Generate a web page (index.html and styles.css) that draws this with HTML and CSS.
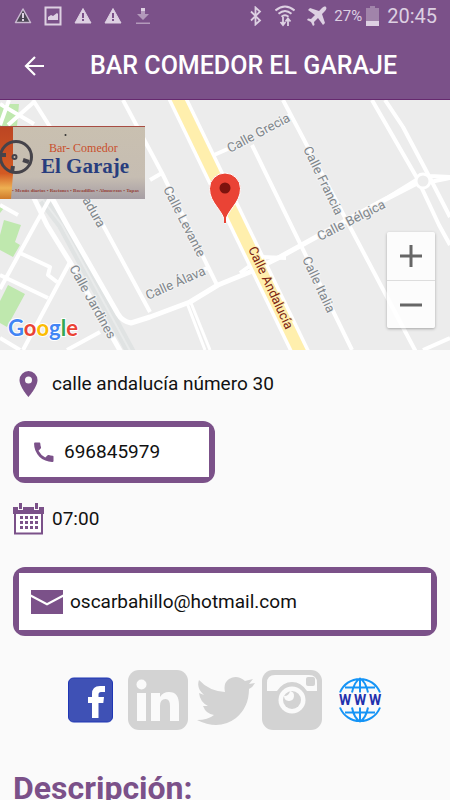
FILE: index.html
```html
<!DOCTYPE html>
<html lang="es">
<head>
<meta charset="utf-8">
<meta name="viewport" content="width=device-width, initial-scale=1">
<title>Bar Comedor El Garaje</title>
<link rel="stylesheet" href="styles.css">
</head>
<body>
<header class="top">
  <div class="status">
    <div class="status-left">
      <svg width="18" height="18" viewBox="0 0 18 18"><path d="M9 2 16.500 15.500H1.500Z" fill="#4b4654" stroke="#c9b8d0" stroke-width="1.500" stroke-linejoin="round"/><path d="M8 6h2v5H8zM8 12h2v2H8z" fill="#ddd0e2"/></svg>
      <svg width="18" height="20" viewBox="0 0 18 20"><path d="M1.500 1.500h15v17h-15z" fill="none" stroke="#ddd0e2" stroke-width="2"/><path d="M4 14v-3l3-2 2 1 4-3 1 1v6z" fill="#ddd0e2"/></svg>
      <svg width="18" height="18" viewBox="0 0 18 18"><path d="M9 1.500 17 16H1Z" fill="#ddd0e2" stroke="#ddd0e2" stroke-linejoin="round"/><path d="M8 6h2v5H8zM8 12h2v2H8z" fill="#7b5189"/></svg>
      <svg width="18" height="18" viewBox="0 0 18 18"><path d="M9 1.500 17 16H1Z" fill="#ddd0e2" stroke="#ddd0e2" stroke-linejoin="round"/><path d="M8 6h2v5H8zM8 12h2v2H8z" fill="#7b5189"/></svg>
      <svg width="18" height="18" viewBox="0 0 18 18"><path d="M7 1h4v3H7z" fill="#ddd0e2"/><path d="M7 4h4v3h4l-6 6-6-6h4zM2 15.500h14V17H2z" fill="#b39abb"/></svg>
    </div>
    <div class="status-right">
      <svg width="14" height="20" viewBox="0 0 14 20"><path d="m2 5.500 9 9-4.500 4V1.500l4.500 4-9 9" fill="none" stroke="#ddd0e2" stroke-width="1.800"/></svg>
      <svg class="wifi" width="20" height="22" viewBox="1 0 20 22" fill="none" stroke="#ddd0e2" stroke-width="2"><path d="M1.500 5.500Q11-2.500 20.500 5.500M4.500 8.800Q11 3.200 17.500 8.800M7.500 11.800Q11 8.800 14.500 11.800"/><path d="M9 12v7M6.500 17 9 20l2.500-3M14 21v-7M11.500 16.500 14 13.500l2.500 3" stroke-width="1.800"/></svg>
      <svg class="plane" width="20" height="20" viewBox="0 0 20 20"><path d="M19 1c-1-1-3 0-4 1l-3 3L3 2 1 4l7 5-4 4-3-.5L0 14l4 2 2 4 1.500-1L7 16l4-4 5 7 2-2-3-9 3-3c1-1 2-3 1-4Z" fill="#ddd0e2"/></svg>
      <span class="percent">27%</span>
      <svg class="battery" width="13" height="20" viewBox="0 0 13 20"><path d="M4 0h5v2h4v13H0V2h4z" fill="#a184aa"/><path d="M0 15h13v5H0z" fill="#ddd0e2"/></svg>
      <span class="clock">20:45</span>
    </div>
  </div>
  <div class="bar">
    <button class="back" type="button" aria-label="Volver"><svg width="22" height="20" viewBox="0 0 22 20" fill="none" stroke="#fff" stroke-width="2.200"><path d="M11 1 2 10l9 9M2 10H20"/></svg></button>
    <h1>BAR COMEDOR EL GARAJE</h1>
  </div>
</header>

<section class="map" aria-label="Mapa">
  <svg class="map-art" viewBox="0 100 450 250" preserveAspectRatio="xMidYMid slice">
    <defs>
      <linearGradient id="paper" x1="0" y1="0" x2="0" y2="1"><stop offset="0" stop-color="#c9c0b0"/><stop offset=".7" stop-color="#c6bdb2"/><stop offset="1" stop-color="#a69ea4"/></linearGradient>
      <linearGradient id="strip" x1="0" y1="0" x2="0" y2="1"><stop offset="0" stop-color="#bb4523"/><stop offset=".65" stop-color="#d35a23"/><stop offset=".85" stop-color="#edb052"/><stop offset="1" stop-color="#cf7a2b"/></linearGradient>
    </defs>
    <path d="M0 100h450v250H0z" fill="#ececec"/>
    <g fill="#bfe8ae">
      <path d="M0 104h19l-2 22H0zM4 220l17 5-6 17 5 3-7 12-13-7v-15zM8 285l17 9-18 33-7-4v-22zM0 205l4 3-4 5z"/>
    </g>
    <path d="M43 200 62 225 135 360" fill="none" stroke="#e0e3e3" stroke-width="10"/>
    <path d="M43 200 62 225 135 360" fill="none" stroke="#e9ebeb" stroke-width="2"/>
    <g fill="none" stroke="#fff" stroke-width="4" stroke-linejoin="round">
      <path d="M0 104 34 124M9 100 0 125M34 102 8 125M33 100 52 130 85 195 103 225 150 312"/>
      <path d="M30 190 47 225 70 262 122 354" stroke-width="5"/>
      <path d="M52 198 67 225 118 314Q122 321 131 323L150 317 190 302 218 285 250 272 280 257 318 236 384 200 417 183" stroke-width="5"/>
      <path d="M50 198 35 225 0 289M0 205 18 215M20 253 50 267 48 275 57 282M0 275 48 298M70 262 23 350M67 350 100 332M0 338 20 350" />
      <path d="M123 100 162 173 218 287M150 180 162 173M195 273 210 267"/>
      <path d="M283 100 416 352M252 145 352 350M214 155 230 148M285 118 292 114"/>
      <path d="M187 303 205 350M191 303 210 350" stroke-width="3"/>
      <path d="M372 100 417 178 439 225 450 245M385 100 403 127 430 178 450 217M384 200 418 179M430 176 450 177M430 182 450 178M423 350 450 338"/>
      <circle cx="423" cy="181" r="7" fill="#ececec" stroke-width="3"/>
    </g>
    <path d="M171 85 303 358" stroke="#fff" stroke-width="19"/>
    <path d="M240 273 262 257 286 258" fill="none" stroke="#fff" stroke-width="4"/>
    <path d="M171 85 303 358" stroke="#ffefad" stroke-width="12"/>
    <g class="street">
      <text transform="translate(230 153) rotate(-28)">Calle Grecia</text>
      <text transform="translate(303 149) rotate(64)">Calle Francia</text>
      <text transform="translate(320 241) rotate(-27)">Calle Bélgica</text>
      <text transform="translate(163 189) rotate(63)">Calle Levante</text>
      <text transform="translate(148 300) rotate(-24)">Calle Álava</text>
      <text transform="translate(302 259) rotate(65)">Calle Italia</text>
      <text transform="translate(69 268) rotate(61)">Calle Jardines</text>
      <text transform="translate(82 200) rotate(60)">adura</text>
      <text class="avenue" transform="translate(248 249) rotate(65)">Calle Andalucía</text>
    </g>
    <g>
      <path d="M0 126h145v73H0z" fill="url(#paper)"/>
      <path d="M0 126h13v48l-2 25H0z" fill="url(#strip)"/>
      <path d="M0 126.500h145" stroke="#a84d43"/>
      <g fill="none" stroke="#45434a"><circle cx="16" cy="157" r="15.500" stroke-width="3"/><circle cx="14.500" cy="157" r="2" stroke-width="2"/><path d="M0 155h6M23 160l6 2M12 172l1-6" stroke-width="4"/></g>
      <circle cx="65.500" cy="135" r="1" fill="#333"/>
      <g class="sign">
        <text class="sign-top" x="49" y="152">Bar- Comedor</text>
        <text class="sign-name" x="41" y="173">El Garaje</text>
        <text class="sign-foot" x="12" y="192">• Menús diarios • Raciones • Bocadillos • Almuerzos • Tapas</text>
      </g>
    </g>
    <path d="M225 224c-1-14-15.500-20-15.500-35.500a15.500 15.500 0 0 1 31 0C240.500 204 226 210 225 224Z" fill="#ea4335" stroke="#fff" stroke-width="1"/>
    <path d="M224 212h2v11h-2z" fill="#ea4335"/>
    <circle cx="225" cy="188" r="5.500" fill="#7d130e"/>
    <text class="google" x="8" y="336"><tspan fill="#4285f4">G</tspan><tspan fill="#ea4335">o</tspan><tspan fill="#fbbc05">o</tspan><tspan fill="#4285f4">g</tspan><tspan fill="#34a853">l</tspan><tspan fill="#ea4335">e</tspan></text>
  </svg>
  <div class="zoom">
    <button type="button" aria-label="Acercar"><svg width="22" height="22" viewBox="0 0 22 22"><path d="M9.500 0h3v9.500H22v3h-9.500V22h-3v-9.500H0v-3h9.500z" fill="#666"/></svg></button>
    <button type="button" aria-label="Alejar"><svg width="22" height="22" viewBox="0 0 22 22"><path d="M0 9.500h22v3H0z" fill="#666"/></svg></button>
  </div>
</section>

<main>
  <div class="row">
    <svg class="row-icon" width="30" height="26" viewBox="0 0 30 26"><path d="M15 0a9 9 0 0 0-9 9c0 7 9 17 9 17s9-10 9-17a9 9 0 0 0-9-9Zm0 5.500a3.500 3.500 0 1 1 0 7 3.500 3.500 0 0 1 0-7Z" fill="#7b5189" fill-rule="evenodd"/></svg>
    <span>calle andalucía número 30</span>
  </div>
  <a class="box phone" href="tel:696845979">
    <span class="box-in">
      <svg width="20" height="20" viewBox="0 0 20 20"><path d="M1 .5h4.500q.7 0 .8.900.100 2 .7 3.800.2.700-.3 1.200L4.500 8.700a16 16 0 0 0 6.800 6.800l2.300-2.200q.500-.5 1.200-.3 1.800.6 3.800.7.900.1.900.8V19q0 .9-1 .9A18 18 0 0 1 .1 1.500Q.1.500 1 .5Z" fill="#7b5189"/></svg>
      <span>696845979</span>
    </span>
  </a>
  <div class="row hours">
    <svg class="row-icon" width="31" height="32" viewBox="0 0 31 32"><path d="M2 10h27v20.500H2z" fill="#fff" stroke="#7b5189" stroke-width="2"/><path d="M0 4h5v3h5V4h11v3h5V4h5v7H0zM6 0h3v6H6zM22 0h3v6h-3z" fill="#7b5189"/><path d="M7 14.500h18M7 19.500h18M7 24.500h18" stroke="#7b5189" stroke-width="3" stroke-dasharray="3 2"/></svg>
    <span>07:00</span>
  </div>
  <a class="box mail" href="mailto:oscarbahillo@hotmail.com">
    <span class="box-in">
      <svg width="32" height="24" viewBox="0 0 32 24"><path d="M0 0h32v4.500L16 13 0 4.500zM0 7l16 8.500L32 7v17H0z" fill="#7b5189"/></svg>
      <span>oscarbahillo@hotmail.com</span>
    </span>
  </a>
  <nav class="social" aria-label="Redes sociales">
    <a href="#facebook" aria-label="Facebook"><svg width="60" height="60" viewBox="0 0 60 60"><rect x="7.500" y="8" width="44" height="44" rx="5" fill="#3f51b5" stroke="#1f36b5"/><path d="M31 48V33h-4v-6h4v-3q0-8 8-8h5v6h-4q-2.500 0-2.500 2.500V27H43l-.7 6h-4.800v15z" fill="#fff"/></svg></a>
    <a href="#linkedin" aria-label="LinkedIn"><svg width="60" height="60" viewBox="0 0 60 60"><rect width="60" height="60" rx="11" fill="#d3d3d3"/><g fill="#fafafa"><circle cx="13.500" cy="14.500" r="5"/><path d="M9 23h9v28H9zM23 23h9v4q3-5 9-5 10 0 10 13v16h-9V36q0-7-4.500-7-5.500 0-5.500 7v15h-9z"/></g></svg></a>
    <a href="#twitter" aria-label="Twitter"><svg width="60" height="60" viewBox="0 0 60 60"><path d="M4 10q10 11 26 12-2-9 4-13 8-5 16 2l8-2-4 5 6-1q-2 4-6 6 0 18-13 29-17 13-39 2 11 0 17-5-8-1-11-9h5q-8-4-9-13l5 2Q1 18 4 10Z" fill="#d3d3d3"/></svg></a>
    <a href="#instagram" aria-label="Instagram"><svg width="60" height="60" viewBox="0 0 60 60"><rect width="60" height="60" rx="11" fill="#d3d3d3"/><path d="M5 21V13q0-8 8-8h34q8 0 8 8v8H45Q39 12 30 12T15 21Z" fill="#fafafa"/><rect x="44" y="7" width="9" height="9" rx="2" fill="#d3d3d3"/><circle cx="30" cy="30" r="13.500" fill="#fafafa"/><circle cx="30" cy="30" r="9" fill="#d3d3d3"/><path d="M22 26a5.500 5.500 0 0 0 6-5 5 5 0 1 1-6 5Z" fill="#fafafa"/></svg></a>
    <a href="#web" aria-label="Página web"><svg width="60" height="60" viewBox="0 0 60 60"><g fill="none" stroke="#1594f6" stroke-width="2"><path d="M11 22.500a21.500 21.500 0 0 1 40 0M11 37.500a21.500 21.500 0 0 0 40 0M31 8v14.500M31 37.500V52M23 22.500Q25 12 31 8.500 37 12 39 22.500M23 37.500Q25 48 31 51.500 37 48 39 37.500M16 17.500h30M16 42.500h30"/></g><text class="www" x="10 25 40" y="35">WWW</text></svg></a>
  </nav>
  <h2>Descripción:</h2>
</main>
</body>
</html>
```
FILE: styles.css
```css
* {
  box-sizing: border-box;
}

html {
  scrollbar-width: none;
}

body {
  margin: 0;
  background: #fafafa;
  color: #111;
  font-family: Roboto, "Liberation Sans", sans-serif;
  font-size: 19px;
  line-height: 24px;
}

svg {
  display: block;
  flex: none;
}

button {
  border: 0;
  padding: 0;
  background: none;
}

a {
  color: inherit;
  text-decoration: none;
}

.top {
  background: #7b5189;
  border-bottom: 1px solid #66296f;
}

.status {
  display: flex;
  justify-content: space-between;
  align-items: center;
  height: 32px;
  padding: 0 13px 0 14px;
  color: #ddd0e2;
}

.status-left,
.status-right {
  display: flex;
  align-items: center;
}

.status-left {
  gap: 12px;
}

.wifi {
  margin-left: 12px;
}

.plane {
  margin-left: 12px;
}

.percent {
  margin-left: 7px;
  font-size: 15px;
}

.battery {
  margin-left: 4px;
}

.clock {
  margin-left: 8px;
  font-size: 20px;
}

.bar {
  display: flex;
  align-items: center;
  height: 67px;
  padding-left: 24px;
  gap: 44px;
}

h1 {
  margin: 0;
  color: #fff;
  font-size: 25px;
  font-weight: 500;
  line-height: 28px;
  white-space: nowrap;
}

.map {
  position: relative;
  height: 250px;
}

.map-art {
  width: 100%;
  height: 100%;
}

.street {
  font-size: 13px;
  fill: #80868b;
  stroke: #f3f3f3;
  stroke-width: 2px;
  paint-order: stroke;
}

.avenue {
  fill: #7c2312;
  stroke: #ffefad;
}

.sign {
  font-family: "Liberation Serif", serif;
}

.sign-top {
  font-size: 12px;
  fill: #c94f2c;
}

.sign-name {
  font-size: 21px;
  font-weight: bold;
  fill: #283d7e;
}

.sign-foot {
  font-size: 5px;
  font-weight: bold;
  fill: #943f38;
}

.google {
  font-family: Lato, sans-serif;
  font-size: 22px;
  font-weight: bold;
  stroke: #fff;
  stroke-width: 2px;
  paint-order: stroke;
}

.zoom {
  position: absolute;
  right: 15px;
  bottom: 22px;
  width: 48px;
  background: rgba(255, 255, 255, 0.85);
  border-radius: 2px;
  box-shadow: 0 1px 3px rgba(0, 0, 0, 0.3);
}

.zoom button {
  display: grid;
  place-items: center;
  width: 100%;
  height: 48px;
}

.zoom button + button {
  border-top: 1px solid #ddd;
}

main {
  padding: 21px 13px 0;
}

.row {
  display: flex;
  align-items: center;
  gap: 8px;
}

.row-icon {
  width: 31px;
}

.box {
  display: block;
  margin-top: 24px;
  padding: 6px;
  border-radius: 12px;
  background: #7b5189;
}

.box-in {
  display: flex;
  align-items: center;
  background: #fff;
}

.phone {
  width: 202px;
}

.phone .box-in {
  height: 50px;
  padding-left: 15px;
  gap: 10px;
}

.hours {
  margin-top: 20px;
}

.mail {
  margin-top: 32px;
}

.mail .box-in {
  height: 57px;
  padding-left: 12px;
  gap: 7px;
}

.social {
  display: flex;
  justify-content: center;
  gap: 7px;
  margin-top: 34px;
}

.www {
  font-size: 14px;
  font-weight: bold;
  fill: #2331ad;
}

h2 {
  margin: 38px 0 0;
  color: #7b5189;
  font-size: 32px;
  line-height: 40px;
}
```
